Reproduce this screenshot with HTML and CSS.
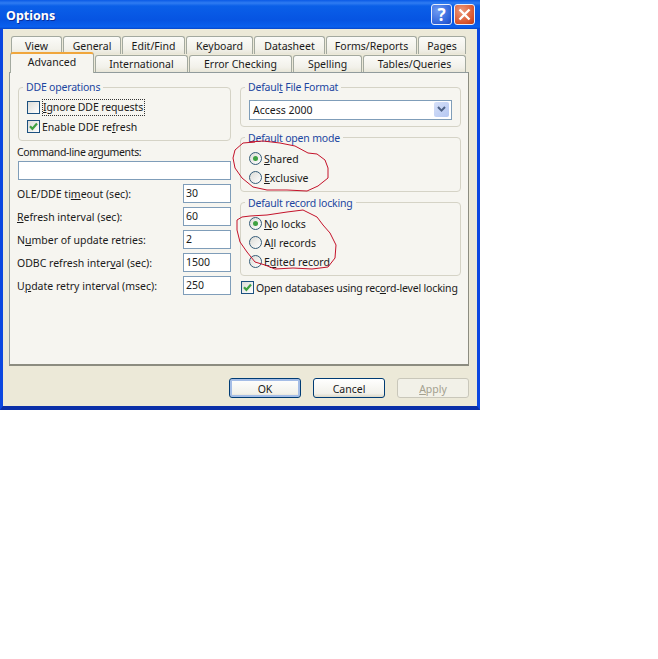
FILE: index.html
```html
<!DOCTYPE html>
<html lang="en">
<head>
<meta charset="utf-8">
<title>Options</title>
<link rel="stylesheet" href="styles.css">
</head>
<body>
<div class="window">
  <header class="titlebar">
    <span class="title">Options</span>
    <div class="caption-buttons">
      <button class="caption help" type="button">?</button>
      <button class="caption close" type="button">
        <svg width="13" height="13" viewBox="0 0 13 13"><path d="M1.5 1.5 11.5 11.5M11.5 1.5 1.5 11.5" stroke="#fff" stroke-width="2.4" fill="none"/></svg>
      </button>
    </div>
  </header>
  <div class="client">
    <div class="tabs-top">
      <div class="tab">View</div>
      <div class="tab">General</div>
      <div class="tab">Edit/Find</div>
      <div class="tab">Keyboard</div>
      <div class="tab">Datasheet</div>
      <div class="tab">Forms/Reports</div>
      <div class="tab">Pages</div>
    </div>
    <div class="tabs-bottom">
      <div class="tab active">Advanced</div>
      <div class="tab">International</div>
      <div class="tab">Error Checking</div>
      <div class="tab">Spelling</div>
      <div class="tab">Tables/Queries</div>
    </div>
    <main class="panel">
      <section class="col">
        <div class="group group-dde">
          <div class="legend">DDE operations</div>
          <div class="stack">
            <div class="opt">
              <span class="check"></span>
              <span class="focus"><u>I</u>gnore DDE requests</span>
            </div>
            <div class="opt">
              <span class="check">
                <svg width="11" height="11" viewBox="0 0 11 11"><path d="M2 5.2 4.4 7.8 9 2.6" stroke="#3fa142" stroke-width="2.2" fill="none"/></svg>
              </span>
              <span>Enable DDE re<u>f</u>resh</span>
            </div>
          </div>
        </div>
        <label class="cmd-label">Command-line a<u>r</u>guments:</label>
        <div class="field"></div>
        <div class="rows">
          <div class="row"><span>OLE/DDE ti<u>m</u>eout (sec):</span><div class="field">30</div></div>
          <div class="row"><span><u>R</u>efresh interval (sec):</span><div class="field">60</div></div>
          <div class="row"><span>N<u>u</u>mber of update retries:</span><div class="field">2</div></div>
          <div class="row"><span>ODBC refresh inter<u>v</u>al (sec):</span><div class="field">1500</div></div>
          <div class="row"><span>U<u>p</u>date retry interval (msec):</span><div class="field">250</div></div>
        </div>
      </section>
      <section class="col col-right">
        <div class="group group-file">
          <div class="legend">Defaul<u>t</u> File Format</div>
          <div class="combo">
            <span class="combo-value">Access 2000</span>
            <span class="combo-arrow">
              <svg width="9" height="7" viewBox="0 0 9 7"><path d="M1 1 4.5 4.6 8 1" stroke="#4d6185" stroke-width="2" fill="none"/></svg>
            </span>
          </div>
        </div>
        <div class="group group-low">
          <div class="legend">Default open mode</div>
          <div class="stack">
            <div class="opt"><span class="radio on"></span><span><u>S</u>hared</span></div>
            <div class="opt"><span class="radio"></span><span><u>E</u>xclusive</span></div>
          </div>
        </div>
        <div class="group group-low">
          <div class="legend">Default record locking</div>
          <div class="stack">
            <div class="opt"><span class="radio on"></span><span><u>N</u>o locks</span></div>
            <div class="opt"><span class="radio"></span><span>A<u>l</u>l records</span></div>
            <div class="opt"><span class="radio"></span><span>E<u>d</u>ited record</span></div>
          </div>
        </div>
        <div class="opt opt-record">
          <span class="check">
            <svg width="11" height="11" viewBox="0 0 11 11"><path d="M2 5.2 4.4 7.8 9 2.6" stroke="#3fa142" stroke-width="2.2" fill="none"/></svg>
          </span>
          <span>Open databases using rec<u>o</u>rd-level locking</span>
        </div>
      </section>
    </main>
    <footer class="buttons">
      <button class="btn btn-default" type="button">OK</button>
      <button class="btn" type="button">Cancel</button>
      <button class="btn btn-disabled" type="button"><u>A</u>pply</button>
    </footer>
  </div>
  <svg class="scribble" width="480" height="410" viewBox="0 0 480 410">
    <path d="M255 142 243 143 235 150 233 158 235 168 242 178 253 187 267 190 287 190 307 191 318 186 328 178 328 168 325 160 317 154 308 153 295 146 280 143 263 141 250 142"/>
    <path d="M242 217 237 220 237 230 240 242 247 252 255 262 265 265 275 269 293 268 312 269 328 267 335 258 336 245 330 233 323 225 317 217 303 210 287 212 267 215 250 216 242 217"/>
  </svg>
</div>
</body>
</html>
```
FILE: styles.css
```css
* { box-sizing: border-box; }
html, body { margin: 0; padding: 0; background: #fff; }
body {
  font-family: "Noto Sans", "DejaVu Sans", sans-serif;
  font-size: 10.5px;
  line-height: 14px;
  color: #1a1a1a;
}
.window {
  position: relative;
  width: 480px;
  height: 410px;
  display: flex;
  flex-direction: column;
  background: #0a3bd6;
  border-left: 3px solid #0b47e0;
  border-right: 3px solid #0b47e0;
  border-bottom: 4px solid #0a2fa8;
}
.titlebar {
  height: 29px;
  margin: 0 -3px;
  padding: 0 5px 0 6px;
  display: flex;
  align-items: center;
  justify-content: space-between;
  background: linear-gradient(#0a5ae6 0, #2f7cf2 3px, #0a5fe8 6px, #0654e2 20px, #0a60ee 27px, #0745c8 29px);
}
.title {
  color: #fff;
  font-weight: 700;
  font-size: 12.5px;
  margin-top: 2px;
  text-shadow: 1px 1px 0 #0a2f9a;
}
.caption-buttons { display: flex; gap: 2px; }
.caption {
  width: 21px;
  height: 21px;
  padding: 0;
  border: 1px solid #e8eefc;
  border-radius: 3px;
  color: #fff;
  display: flex;
  align-items: center;
  justify-content: center;
  font: 700 17px/1 "Noto Sans", sans-serif;
}
.help { background: radial-gradient(circle at 30% 30%, #6f9bf2, #2a5fd8 75%, #1c45b8); }
.close { background: radial-gradient(circle at 35% 30%, #ec9a7e, #d9542c 70%, #b83a18); }
.client {
  flex: 1;
  min-height: 0;
  padding: 7px 8px 0 6px;
  background: #ece9d8;
}
.tabs-top, .tabs-bottom {
  position: relative;
  z-index: 1;
  display: grid;
  align-items: start;
  gap: 1px;
}
.tabs-top {
  height: 19px;
  margin-left: 2px;
  width: 455px;
  grid-template-columns: 51px 58px 63px 67px 71px 91px 48px;
}
.tabs-bottom {
  height: 17px;
  margin-left: 1px;
  width: 456px;
  grid-template-columns: 84px 93px 103px 69px 103px;
}
.tab {
  height: 18px;
  border: 1px solid #a3a99f;
  border-bottom: 0;
  border-radius: 3px 3px 0 0;
  background: linear-gradient(#fbfbf8, #f2f1ea 70%, #e8e6d8);
  text-align: center;
  line-height: 19px;
}
.tabs-bottom .tab { height: 17px; line-height: 17px; }
.tabs-bottom .tab.active {
  height: 21px;
  margin-top: -3px;
  line-height: 17px;
  border-color: #a3a99f;
  border-top: 2px solid #f0a63c;
  background: #f6f5f0;
}
.panel {
  height: 294px;
  border: 1px solid #919b9c;
  border-right-color: #8c8c80;
  border-bottom: 2px solid #8c8c80;
  background: #f6f5f0;
  padding: 14px 7px 0 8px;
  display: grid;
  grid-template-columns: 213px 221px;
  align-items: start;
  gap: 9px;
}
.col { display: flex; flex-direction: column; }
.col-right { gap: 10px; }
.group {
  border: 1px solid #d5d3c6;
  border-radius: 4px;
  padding: 0 8px 7px;
}
.legend {
  width: fit-content;
  height: 14px;
  margin: -7px 0 7px -4px;
  padding: 0 3px;
  line-height: 12px;
  letter-spacing: -0.2px;
  background: #f6f5f0;
  color: #1c46a0;
}
.group-low .legend { line-height: 14px; }
.group-dde .legend { margin-bottom: 6px; }
.group-file { padding-bottom: 6px; }
.group-file .legend { margin-bottom: 5px; }
.stack { display: flex; flex-direction: column; gap: 6px; }
.opt {
  display: flex;
  align-items: center;
  gap: 2px;
  height: 13px;
  white-space: nowrap;
}
.opt-record { margin: -5px 0 0 1px; letter-spacing: -0.17px; }
.check, .radio {
  flex: none;
  width: 13px;
  height: 13px;
  border: 1px solid #1c5180;
  background: linear-gradient(135deg, #dcdcd7, #fff);
  display: flex;
  align-items: center;
  justify-content: center;
}
.radio {
  border-radius: 50%;
  border-color: #355c78;
}
.radio.on::after {
  content: "";
  width: 5px;
  height: 5px;
  border-radius: 50%;
  background: #3fa142;
}
.focus {
  border: 1px dotted #333;
  margin: -1px 0;
  line-height: 15px;
  padding: 0 1px 0 0;
  letter-spacing: -0.12px;
}
.cmd-label { margin: 4px 0 2px -1px; height: 14px; letter-spacing: -0.35px; }
.field {
  height: 19px;
  border: 1px solid #7f9db9;
  background: #fff;
  padding: 0 2px;
  line-height: 17px;
}
.rows { display: flex; flex-direction: column; gap: 4px; margin-top: 4px; }
.row {
  display: grid;
  grid-template-columns: 1fr 48px;
  align-items: center;
  margin-left: -1px;
}
.combo {
  height: 20px;
  border: 1px solid #7f9db9;
  background: #fff;
  padding: 1px 2px 2px 2px;
  display: flex;
  align-items: center;
  justify-content: space-between;
}
.combo-value { padding-left: 1px; }
.combo-arrow {
  width: 15px;
  height: 15px;
  border-radius: 2px;
  background: linear-gradient(135deg, #d6e0f8, #b4c7f2);
  display: flex;
  align-items: center;
  justify-content: center;
}
.buttons {
  display: flex;
  justify-content: flex-end;
  gap: 12px;
  padding-top: 12px;
}
.btn {
  width: 72px;
  height: 20px;
  padding: 2px 0 0;
  border: 1px solid #003c74;
  border-radius: 3px;
  background: linear-gradient(#fff, #f2f1ea 80%, #dcd8c8);
  font: inherit;
  color: #1a1a1a;
}
.btn-default { box-shadow: inset 0 0 0 2px #a5bde6; }
.btn-disabled {
  border-color: #c9c7ba;
  background: #f2f1e8;
  color: #a3a08f;
}
.scribble {
  position: absolute;
  left: -3px;
  top: 0;
  pointer-events: none;
}
.scribble path {
  fill: none;
  stroke: #c4122a;
  stroke-width: 1;
  stroke-linejoin: round;
}
```
